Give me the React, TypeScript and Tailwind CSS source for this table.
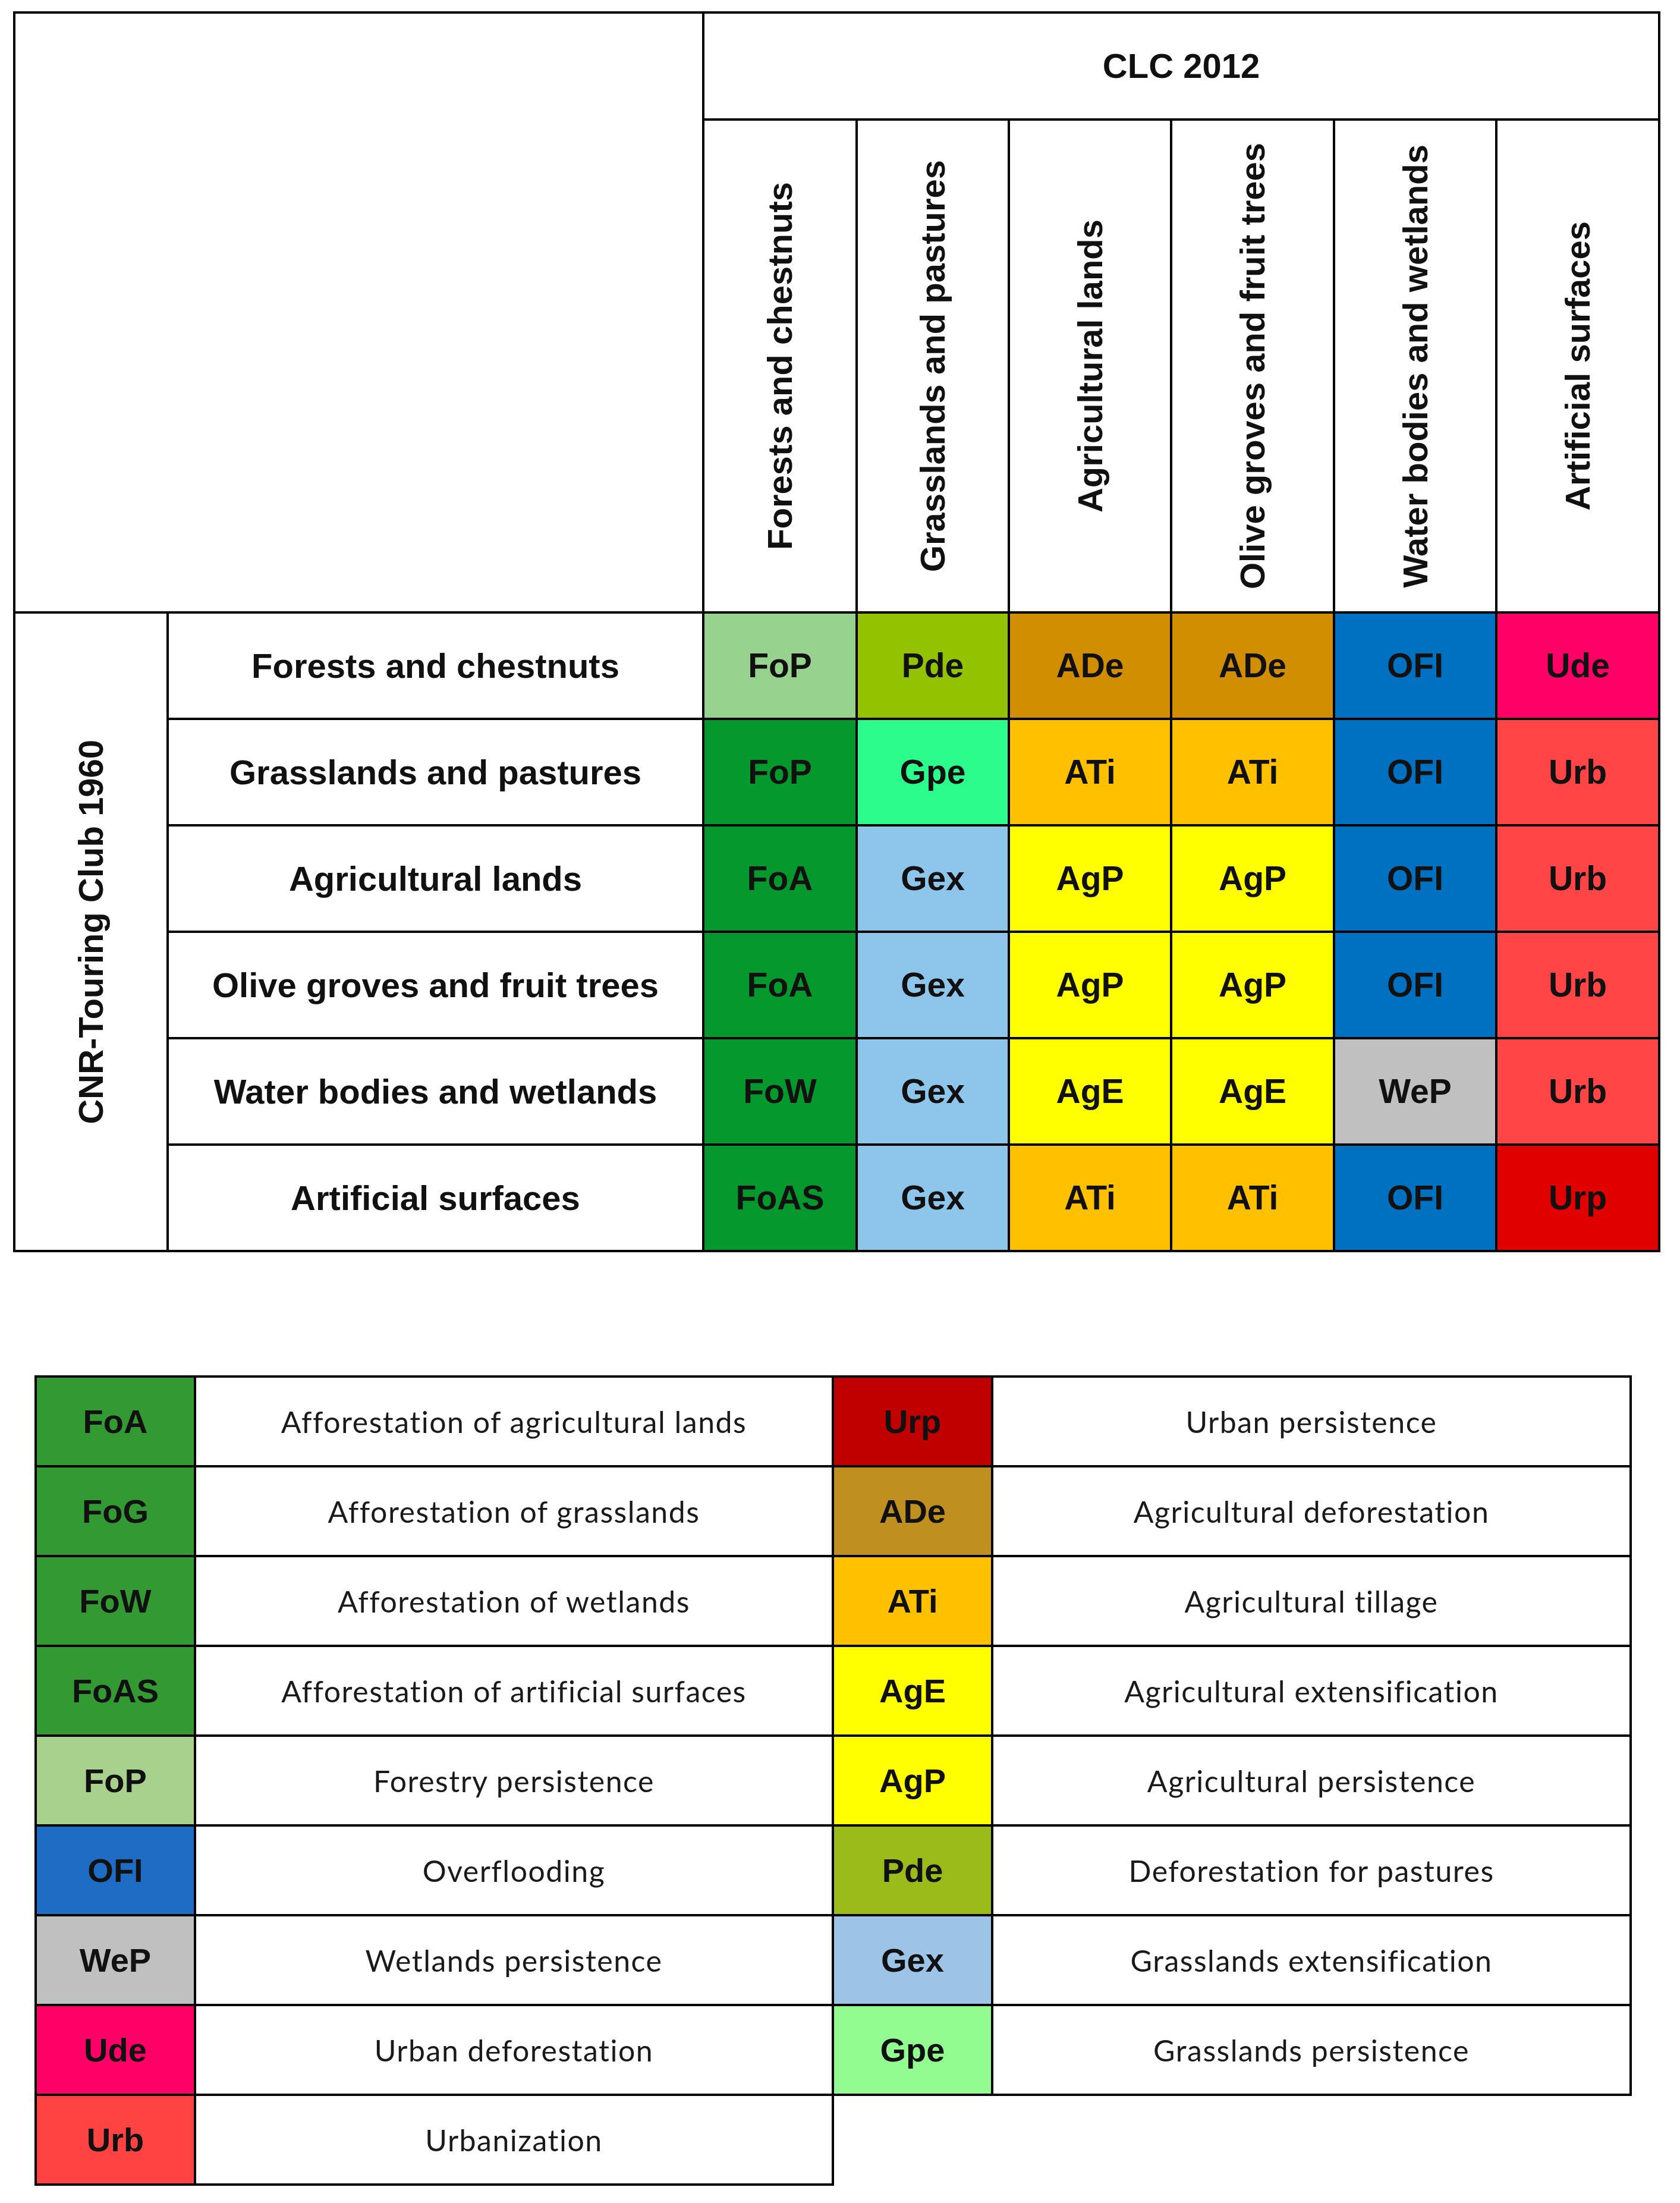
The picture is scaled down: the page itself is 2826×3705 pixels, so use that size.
const columns = [
  'Forests and chestnuts',
  'Grasslands and pastures',
  'Agricultural lands',
  'Olive groves and fruit trees',
  'Water bodies and wetlands',
  'Artificial surfaces',
];

const colors: Record<string, string> = {
  FoPl: 'bg-[#98d28f]',
  FoP: 'bg-[#04982d]',
  FoA: 'bg-[#04982d]',
  FoW: 'bg-[#04982d]',
  FoAS: 'bg-[#04982d]',
  Pde: 'bg-[#93c300]',
  Gpe: 'bg-[#2cfc8c]',
  Gex: 'bg-[#8ec5eb]',
  ADe: 'bg-[#d08e00]',
  ATi: 'bg-[#ffc000]',
  AgP: 'bg-[#ffff00]',
  AgE: 'bg-[#ffff00]',
  OFI: 'bg-[#0070c0]',
  WeP: 'bg-[#c0c0c0]',
  Ude: 'bg-[#ff0066]',
  Urb: 'bg-[#ff4545]',
  Urp: 'bg-[#e00000]',
};

// first row FoP is the light green one
const matrix = [
  ['FoPl', 'Pde', 'ADe', 'ADe', 'OFI', 'Ude'],
  ['FoP', 'Gpe', 'ATi', 'ATi', 'OFI', 'Urb'],
  ['FoA', 'Gex', 'AgP', 'AgP', 'OFI', 'Urb'],
  ['FoA', 'Gex', 'AgP', 'AgP', 'OFI', 'Urb'],
  ['FoW', 'Gex', 'AgE', 'AgE', 'WeP', 'Urb'],
  ['FoAS', 'Gex', 'ATi', 'ATi', 'OFI', 'Urp'],
];

const legendLeft = [
  ['FoA', 'Afforestation of agricultural lands', 'bg-[#339933]'],
  ['FoG', 'Afforestation of grasslands', 'bg-[#339933]'],
  ['FoW', 'Afforestation of wetlands', 'bg-[#339933]'],
  ['FoAS', 'Afforestation of artificial surfaces', 'bg-[#339933]'],
  ['FoP', 'Forestry persistence', 'bg-[#a9d18e]'],
  ['OFI', 'Overflooding', 'bg-[#1e6cc4]'],
  ['WeP', 'Wetlands persistence', 'bg-[#c0c0c0]'],
  ['Ude', 'Urban deforestation', 'bg-[#ff0066]'],
  ['Urb', 'Urbanization', 'bg-[#ff4343]'],
];

const legendRight = [
  ['Urp', 'Urban persistence', 'bg-[#c00000]'],
  ['ADe', 'Agricultural deforestation', 'bg-[#bf8f20]'],
  ['ATi', 'Agricultural tillage', 'bg-[#ffc000]'],
  ['AgE', 'Agricultural extensification', 'bg-[#ffff00]'],
  ['AgP', 'Agricultural persistence', 'bg-[#ffff00]'],
  ['Pde', 'Deforestation for pastures', 'bg-[#9bbb1a]'],
  ['Gex', 'Grasslands extensification', 'bg-[#9dc3e6]'],
  ['Gpe', 'Grasslands persistence', 'bg-[#92fc90]'],
];

const LegendRows = ({ rows }: { rows: string[][] }) => (
  <>
    {rows.map(([code, desc, bg]) => (
      <div key={code} className="contents">
        <div className={`${bg} flex items-center justify-center text-[56px] font-bold text-[#111]`}>{code}</div>
        <div className="bg-white flex items-center justify-center font-[family-name:Lato,sans-serif] text-[50px] tracking-[1.5px] text-[#1a1a1a]">
          {desc}
        </div>
      </div>
    ))}
  </>
);

export default function App() {
  return (
    <div className="min-h-screen w-[2826px] bg-white font-[family-name:Liberation_Sans,Arial,sans-serif] leading-none text-[#111]">
      <div className="ml-[22px] pt-[19px]">
        <div className="grid w-fit grid-cols-[254px_897px_254px_252px_269px_270px_269px_270px] grid-rows-[176px_825px_repeat(6,175px)] gap-[4px] bg-black p-[4px]">
          <div className="col-span-2 row-span-2 bg-white" />
          <div className="col-span-6 bg-white flex items-center justify-center text-[58px] font-bold">CLC 2012</div>
          {columns.map((c) => (
            <div key={c} className="bg-white flex items-center justify-center">
              <span className="[writing-mode:vertical-rl] rotate-180 text-[58px] font-bold whitespace-nowrap">{c}</span>
            </div>
          ))}
          <div className="row-span-6 bg-white flex items-center justify-center">
            <span className="[writing-mode:vertical-rl] rotate-180 text-[58px] font-bold whitespace-nowrap">CNR-Touring Club 1960</span>
          </div>
          {matrix.map((row, i) => (
            <div key={i} className="contents">
              <div className="bg-white flex items-center justify-center text-[58px] font-bold">{columns[i]}</div>
              {row.map((code, j) => (
                <div key={j} className={`${colors[code]} flex items-center justify-center text-[57px] font-bold`}>
                  {code === 'FoPl' ? 'FoP' : code}
                </div>
              ))}
            </div>
          ))}
        </div>
      </div>

      <div className="ml-[58px] mt-[207px] flex items-start">
        <div className="grid grid-cols-[264px_1069px] grid-rows-[repeat(9,147px)] gap-[4px] bg-black p-[4px]">
          <LegendRows rows={legendLeft} />
        </div>
        <div className="grid grid-cols-[264px_1070px] grid-rows-[repeat(8,147px)] gap-[4px] bg-black py-[4px] pr-[4px]">
          <LegendRows rows={legendRight} />
        </div>
      </div>
    </div>
  );
}
